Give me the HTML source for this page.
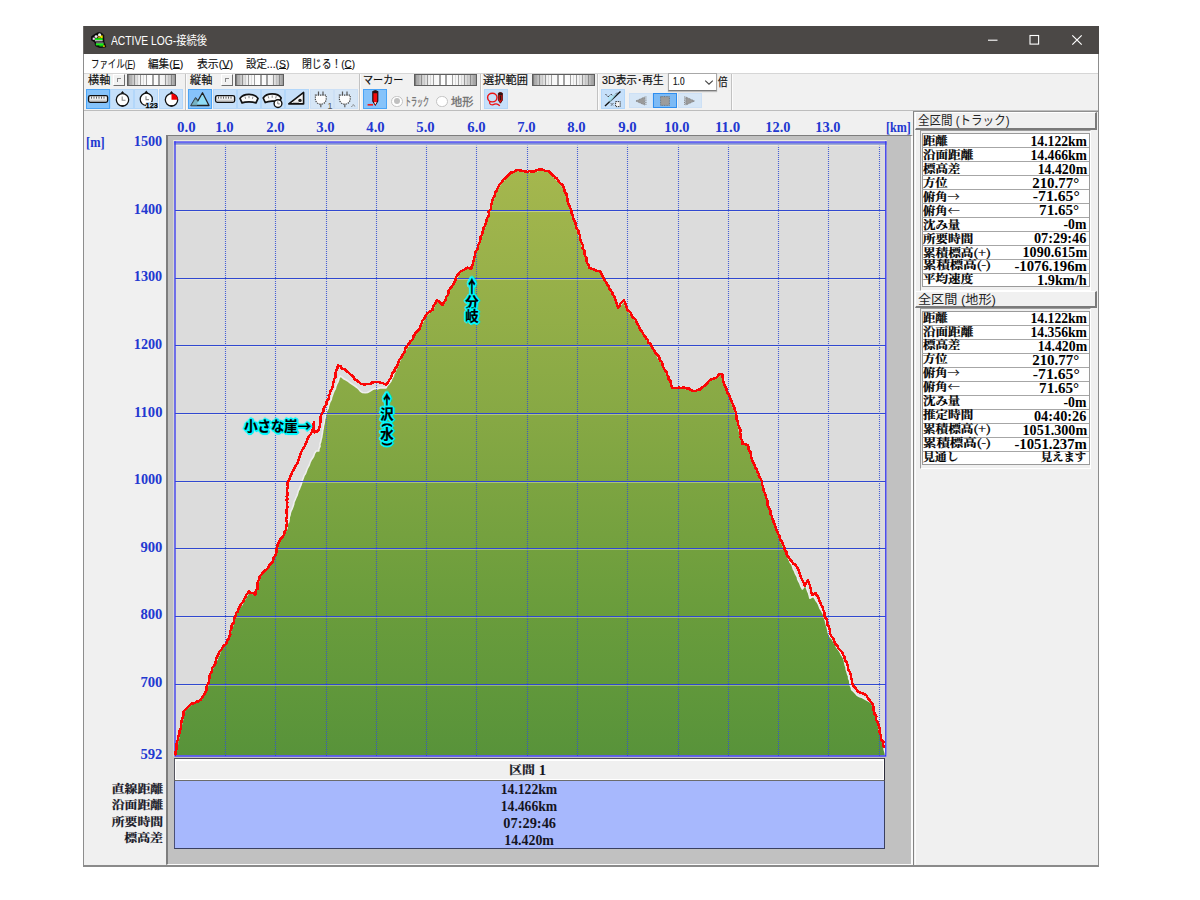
<!DOCTYPE html>
<html lang="ja"><head><meta charset="utf-8"><title>ACTIVE LOG-接続後</title>
<style>
html,body{margin:0;padding:0;background:#fff;}
body{width:1200px;height:900px;position:relative;overflow:hidden;font-family:"Liberation Sans","Noto Sans CJK JP",sans-serif;}
div{position:absolute;box-sizing:content-box;}
.abs,.chart{position:absolute;}
.chart{left:0;top:0;}
.fit{display:inline-block;white-space:nowrap;}
.ttl{color:#fff;font:12px/29px "Liberation Sans","Noto Sans CJK JP",sans-serif;white-space:nowrap;}
.menu{font:11.2px/16px "Liberation Sans","Noto Sans CJK JP",sans-serif;color:#111;white-space:nowrap;-webkit-text-stroke:.15px #111;}
.menu u{text-underline-offset:0px;}
.tl{font:11.3px/13px "Liberation Sans","Noto Sans CJK JP",sans-serif;color:#111;white-space:nowrap;-webkit-text-stroke:.2px currentColor;}
.tl.dis{color:#6f6f6f;-webkit-text-stroke:.3px #6f6f6f;}
.radio{width:9.4px;height:9.4px;border:1.3px solid #c3c3c3;border-radius:50%;background:#fff;}
.radio i{position:absolute;left:1.7px;top:1.7px;width:6px;height:6px;border-radius:50%;background:#c0c0c0;}
.ax{font:bold 13.6px/16px "Liberation Serif","Noto Serif CJK SC",serif;color:#2238d0;white-space:nowrap;}
.ar{font-family:"Noto Sans CJK JP",sans-serif;}
.ar2{font-family:"Noto Serif CJK SC",serif;}
.mk{font:bold 13.4px/16px "Liberation Sans","Noto Sans CJK JP",sans-serif;color:#000;white-space:nowrap;-webkit-text-stroke:.2px #000;
 text-shadow:1.5px 0 0 #00f8ff,-1.5px 0 0 #00f8ff,0 1.5px 0 #00f8ff,0 -1.5px 0 #00f8ff,1.2px 1.2px 0 #00f8ff,-1.2px -1.2px 0 #00f8ff,1.2px -1.2px 0 #00f8ff,-1.2px 1.2px 0 #00f8ff,2px 0 1px #00f8ff,-2px 0 1px #00f8ff,0 2px 1px #00f8ff,0 -2px 1px #00f8ff,0 0 2px #00f8ff;}
.mk.v{width:16px;height:0;}
.mk.v b{display:block;position:absolute;left:0;width:16px;height:16px;text-align:center;font-weight:bold;overflow:visible;line-height:16px;}
.mk.v b.va span{display:inline-block;transform:scaleY(1.55);transform-origin:50% 50%;}
.mk.v b.vp i{display:inline-block;font-style:normal;transform:rotate(90deg) scale(1.0,.82);line-height:16px;}
.bt{font:bold 14px/16px "Liberation Serif","Noto Serif CJK SC",serif;color:#15151f;white-space:nowrap;}
.ph{font:12.5px/16px "Liberation Sans","Noto Sans CJK JP",sans-serif;color:#262626;white-space:nowrap;font-weight:400;}
.pr{font:bold 14px/16px "Liberation Serif","Noto Serif CJK SC",serif;color:#000;white-space:nowrap;}
.cj{font-family:"Noto Serif CJK SC",serif;font-size:12.3px;line-height:16px;position:relative;top:0px;display:inline-block;transform:scaleY(.9);-webkit-text-stroke:.25px currentColor;}
</style></head>
<body>
<div style="left:83px;top:26px;width:1016px;height:840px;background:#f0f0f0;"></div>
<div style="left:83px;top:26px;width:1016px;height:27.9px;background:#4b4846;"></div>
<div class="ttl" style="left:111px;top:27px;"><span class="fit" style="transform:scaleX(0.8570);transform-origin:left 50%">ACTIVE LOG-接続後</span></div>
<svg class="abs" style="left:980px;top:26px" width="119" height="28" viewBox="0 0 119 28"><path d="M8,14.2 h9.5" stroke="#fff" stroke-width="1.1" fill="none"/><rect x="50" y="9.5" width="8.6" height="8.6" stroke="#fff" stroke-width="1.1" fill="none"/><path d="M92.3,9.3 l9.4,9.4 M101.7,9.3 l-9.4,9.4" stroke="#fff" stroke-width="1.2" fill="none"/></svg>
<svg class="abs" style="left:91.2px;top:31.7px" width="16" height="16" viewBox="0 0 16 16"><path d="M7.3,.4 L10.5,.9 L12.8,3.3 L13.1,10 L14,12 L15,14.9 L9,15.7 L4.6,14 L3.7,10.2 L.2,7.9 L.2,4.8 L3.7,2.3 Z" fill="#0a0a0a" stroke="#0a0a0a" stroke-width=".6" stroke-linejoin="round"/><rect x="6.8" y="3.4" width="4.9" height="2.9" fill="#f0e000"/><rect x="3.9" y="6.3" width="7.8" height="2.1" fill="#16f016"/><rect x="3.9" y="8.3" width="7.8" height="1" fill="#f2d4f2"/><rect x="5.1" y="10.6" width="7.4" height=".9" fill="#eec8ee"/><rect x="4.9" y="11.4" width="7.8" height="2" fill="#16f016"/><rect x="8.4" y="13.3" width="4.1" height="1.1" fill="#16f016"/><rect x="12" y="13.4" width="1.9" height="1.4" fill="#e8d000"/><rect x="1.7" y="5.6" width="2.1" height="2.2" fill="#f0dcf0"/><circle cx="5.1" cy="4.6" r="1.45" fill="#f4e8f4"/><circle cx="8.6" cy="2.7" r="1.55" fill="#f0f0f0"/><path d="M6.6,5.6 l1.6,-1.2 l1.2,1.4" fill="none" stroke="#0a0a0a" stroke-width=".8"/></svg>
<div style="left:84px;top:53.9px;width:1014px;height:19.2px;background:#ffffff;"></div>
<div class="menu" style="left:91.2px;top:56px;"><span class="fit" style="transform:scaleX(0.7517);transform-origin:left 50%">ファイル(<u>F</u>)</span></div>
<div class="menu" style="left:148.3px;top:56px;"><span class="fit" style="transform:scaleX(0.9487);transform-origin:left 50%">編集(<u>E</u>)</span></div>
<div class="menu" style="left:196.6px;top:56px;"><span class="fit" style="transform:scaleX(0.9675);transform-origin:left 50%">表示(<u>V</u>)</span></div>
<div class="menu" style="left:245.6px;top:56px;"><span class="fit" style="transform:scaleX(0.9327);transform-origin:left 50%">設定...(<u>S</u>)</span></div>
<div class="menu" style="left:301.9px;top:56px;"><span class="fit" style="transform:scaleX(0.8788);transform-origin:left 50%">閉じる！(<u>C</u>)</span></div>
<div style="left:84px;top:73px;width:1014px;height:37.6px;background:#f1f1f1;border-top:1px solid #d6d6d6;border-bottom:1px solid #bdbdbd;box-sizing:border-box;"></div>
<div class="tl" style="left:88px;top:74.1px;"><span class="fit" style="transform:scaleX(0.9863);transform-origin:left 50%">横軸</span></div>
<div style="left:112.8px;top:74.2px;width:12px;height:12px;background:#f2f2f2;border:1px solid #fff;border-right:1.5px solid #6e6e6e;border-bottom:1.5px solid #6e6e6e;box-sizing:border-box;"><div style="left:3.2px;top:3px;width:3px;height:3px;border-left:1px solid #888;border-top:1px solid #888;"></div></div>
<div style="left:126.9px;top:73.7px;width:48.8px;height:12.1px;background:repeating-linear-gradient(90deg,rgba(105,105,105,.62) 0 1.2px,rgba(255,255,255,0) 1.2px 3.2px,rgba(150,150,150,.28) 3.2px 4px,rgba(255,255,255,0) 4px 6.1px),linear-gradient(90deg,#9a9a9a 0,#c4c4c4 9%,#f2f2f2 24%,#ffffff 50%,#f2f2f2 76%,#c4c4c4 91%,#9a9a9a 100%);border:1.3px solid #5e5e5e;box-sizing:border-box;"></div>
<div style="left:86px;top:89px;width:24px;height:20px;background:#86c3fa;border:1px solid #4aa4f6;box-sizing:border-box;"><svg class="abs" style="left:-1px;top:-1px" width="24" height="20" viewBox="0 0 24 20"><rect x="2.6" y="6.6" width="19" height="6.6" rx="1.6" fill="#f4f4f4" stroke="#111" stroke-width="1.4"/><path d="M5.5,7.5v2.2M8,7.5v2.2M10.5,7.5v2.2M13,7.5v2.2M15.5,7.5v2.2M18,7.5v2.2" stroke="#555" stroke-width="0.9"/><rect x="3.6" y="10.6" width="17" height="1.8" fill="#cfcfcf"/></svg></div>
<div style="left:110.2px;top:89px;width:24px;height:20px;background:#c6e0fa;border:1px solid #b3d7fa;box-sizing:border-box;"><svg class="abs" style="left:-1px;top:-1px" width="24" height="20" viewBox="0 0 24 20"><circle cx="12.5" cy="10.8" r="6.2" fill="#fff" stroke="#111" stroke-width="1.3"/><path d="M10.4,4.6 L12.5,1.9 L14.6,4.6 Z" fill="#111"/><path d="M11.4,17 h2.2" stroke="#111" stroke-width="1.4"/><path d="M12.2,7.6 v3.6 h3.3" stroke="#8a8a8a" stroke-width="1.1" fill="none"/></svg></div>
<div style="left:134.4px;top:89px;width:24px;height:20px;background:#c6e0fa;border:1px solid #b3d7fa;box-sizing:border-box;"><svg class="abs" style="left:-1px;top:-1px" width="24" height="20" viewBox="0 0 24 20"><circle cx="12.3" cy="10.3" r="6.1" fill="#fff" stroke="#111" stroke-width="1.3"/><path d="M10.2,4.2 L12.3,1.5 L14.4,4.2 Z" fill="#111"/><path d="M12,7.2 v3.4 h3" stroke="#8a8a8a" stroke-width="1.1" fill="none"/><rect x="12" y="13" width="12" height="7" fill="#c6e0fa"/><text x="11.6" y="19" font-family="Liberation Sans,sans-serif" font-weight="bold" font-size="7.4" fill="#000" stroke="#000" stroke-width=".25">123</text></svg></div>
<div style="left:158.6px;top:89px;width:24px;height:20px;background:#c6e0fa;border:1px solid #b3d7fa;box-sizing:border-box;"><svg class="abs" style="left:-1px;top:-1px" width="24" height="20" viewBox="0 0 24 20"><circle cx="12.5" cy="10.8" r="6.2" fill="#fff" stroke="#111" stroke-width="1.3"/><path d="M12.5,10.8 V4.6 A6.2,6.2 0 0 1 18.7,10.8 Z" fill="#f00000"/><path d="M10.4,4.6 L12.5,1.9 L14.6,4.6 Z" fill="#111"/><path d="M11.4,17 h2.2" stroke="#111" stroke-width="1.4"/></svg></div>
<div style="left:185px;top:74px;width:1px;height:36px;background:#c2c2c2;"></div><div style="left:186px;top:74px;width:1px;height:36px;background:#fbfbfb;"></div>
<div class="tl" style="left:189.75px;top:74.1px;"><span class="fit" style="transform:scaleX(0.9885);transform-origin:left 50%">縦軸</span></div>
<div style="left:220.6px;top:74.2px;width:12px;height:12px;background:#f2f2f2;border:1px solid #fff;border-right:1.5px solid #6e6e6e;border-bottom:1.5px solid #6e6e6e;box-sizing:border-box;"><div style="left:3.2px;top:3px;width:3px;height:3px;border-left:1px solid #888;border-top:1px solid #888;"></div></div>
<div style="left:234.8px;top:73.7px;width:49px;height:12.1px;background:repeating-linear-gradient(90deg,rgba(105,105,105,.62) 0 1.2px,rgba(255,255,255,0) 1.2px 3.2px,rgba(150,150,150,.28) 3.2px 4px,rgba(255,255,255,0) 4px 6.1px),linear-gradient(90deg,#9a9a9a 0,#c4c4c4 9%,#f2f2f2 24%,#ffffff 50%,#f2f2f2 76%,#c4c4c4 91%,#9a9a9a 100%);border:1.3px solid #5e5e5e;box-sizing:border-box;"></div>
<div style="left:188.3px;top:89px;width:24px;height:20px;background:#86c3fa;border:1px solid #4aa4f6;box-sizing:border-box;"><svg class="abs" style="left:-1px;top:-1px" width="24" height="20" viewBox="0 0 24 20"><path d="M3,16.5 L7.5,9 L9.8,12 L14.5,3.8 L21,16.5 Z" fill="#8fdcf5" stroke="#222" stroke-width="1.3" stroke-linejoin="round"/><path d="M3,16.5 L7.5,9 L9.8,12 L9,16.5 Z" fill="#6fa9b8" opacity=".8"/></svg></div>
<div style="left:212.55px;top:89px;width:24px;height:20px;background:#c6e0fa;border:1px solid #b3d7fa;box-sizing:border-box;"><svg class="abs" style="left:-1px;top:-1px" width="24" height="20" viewBox="0 0 24 20"><rect x="2.6" y="6.6" width="19" height="6.6" rx="1.6" fill="#f4f4f4" stroke="#111" stroke-width="1.4"/><path d="M5.5,7.5v2.2M8,7.5v2.2M10.5,7.5v2.2M13,7.5v2.2M15.5,7.5v2.2M18,7.5v2.2" stroke="#555" stroke-width="0.9"/><rect x="3.6" y="10.6" width="17" height="1.8" fill="#cfcfcf"/></svg></div>
<div style="left:236.8px;top:89px;width:24px;height:20px;background:#c6e0fa;border:1px solid #b3d7fa;box-sizing:border-box;"><svg class="abs" style="left:-1px;top:-1px" width="24" height="20" viewBox="0 0 24 20"><path d="M3,9.4 C6.5,4 17.5,4 21,9.4 L19,13.9 C15.5,12.5 8.5,12.5 5,13.9 Z" fill="#fbfbfb" stroke="#111" stroke-width="1.7" stroke-linejoin="round"/><path d="M8,7.6l.6,2.2M12,6.8v2.4M16,7.6l-.6,2.2" stroke="#888" stroke-width="1"/></svg></div>
<div style="left:261.05px;top:89px;width:24px;height:20px;background:#c6e0fa;border:1px solid #b3d7fa;box-sizing:border-box;"><svg class="abs" style="left:-1px;top:-1px" width="24" height="20" viewBox="0 0 24 20"><path d="M2.2,9 C5.7,3.6 16.7,3.6 20.2,9 L18.6,12.6 C14.7,11.6 7.7,12 4.2,13.5 Z" fill="#fbfbfb" stroke="#111" stroke-width="1.7" stroke-linejoin="round"/><path d="M7.2,7.2l.6,2.2M11.2,6.4v2.4M15.2,7.2l-.6,2.2" stroke="#888" stroke-width="1"/><circle cx="17" cy="14.6" r="3.9" fill="#fff" stroke="#111" stroke-width="1.4"/><path d="M16.8,12.4v2.5h2" stroke="#777" stroke-width="1" fill="none"/></svg></div>
<div style="left:285.3px;top:89px;width:24px;height:20px;background:#c6e0fa;border:1px solid #b3d7fa;box-sizing:border-box;"><svg class="abs" style="left:-1px;top:-1px" width="24" height="20" viewBox="0 0 24 20"><path d="M3.8,14.9 L18.6,3.4 L18.6,14.9 Z" fill="#f4f4f4" stroke="#111" stroke-width="1.6" stroke-linejoin="round"/><circle cx="15" cy="11.4" r="1.7" fill="#222"/><path d="M8,13.4h6" stroke="#aaa" stroke-width=".8"/></svg></div>
<div style="left:309.55px;top:89px;width:24px;height:20px;background:#d6e6f6;border:1px solid #cde0f5;box-sizing:border-box;"><svg class="abs" style="left:-1px;top:-1px" width="24" height="20" viewBox="0 0 24 20"><path d="M8.5,2.4v3.6M13,2.4v3.6" stroke="#555" stroke-width="1.2"/><path d="M5.4,6.2h10.8v3.6c0,3.4-2.6,5.4-5.4,5.4s-5.4,-2-5.4,-5.4z" fill="#fdfdfd" stroke="#4a4a4a" stroke-width="1.2" stroke-dasharray="1.4,.9"/><path d="M10.8,15.2v3" stroke="#666" stroke-width="1.3"/><text x="17.6" y="19.6" font-family="Liberation Sans,sans-serif" font-size="9" fill="#555">1</text></svg></div>
<div style="left:333.8px;top:89px;width:24px;height:20px;background:#d6e6f6;border:1px solid #cde0f5;box-sizing:border-box;"><svg class="abs" style="left:-1px;top:-1px" width="24" height="20" viewBox="0 0 24 20"><path d="M8.5,2.4v3.6M13,2.4v3.6" stroke="#555" stroke-width="1.2"/><path d="M5.4,6.2h10.8v3.6c0,3.4-2.6,5.4-5.4,5.4s-5.4,-2-5.4,-5.4z" fill="#fdfdfd" stroke="#4a4a4a" stroke-width="1.2" stroke-dasharray="1.4,.9"/><path d="M10.8,15.2v3" stroke="#666" stroke-width="1.3"/><path d="M17.6,17.8l1.7,-2.4 1.7,2.4" stroke="#666" stroke-width="1" fill="none" stroke-dasharray="1.1,.7"/></svg></div>
<div style="left:359px;top:74px;width:1px;height:36px;background:#c2c2c2;"></div><div style="left:360px;top:74px;width:1px;height:36px;background:#fbfbfb;"></div>
<div class="tl" style="left:363.25px;top:74.1px;"><span class="fit" style="transform:scaleX(0.8926);transform-origin:left 50%">マーカー</span></div>
<div style="left:413.5px;top:73.7px;width:63.2px;height:12.1px;background:repeating-linear-gradient(90deg,rgba(105,105,105,.62) 0 1.2px,rgba(255,255,255,0) 1.2px 3.2px,rgba(150,150,150,.28) 3.2px 4px,rgba(255,255,255,0) 4px 6.1px),linear-gradient(90deg,#9a9a9a 0,#c4c4c4 9%,#f2f2f2 24%,#ffffff 50%,#f2f2f2 76%,#c4c4c4 91%,#9a9a9a 100%);border:1.3px solid #5e5e5e;box-sizing:border-box;"></div>
<div style="left:363.3px;top:89px;width:23.7px;height:20px;background:#86c3fa;border:1px solid #4aa4f6;box-sizing:border-box;"><svg class="abs" style="left:-1px;top:-1px" width="24" height="20" viewBox="0 0 24 20"><path d="M9.8,2.6 q2.5,-1.7 5,0 v9.6 l-2.5,3.9 l-2.5,-3.9 z" fill="#f40a0a" stroke="#1a0808" stroke-width="1.1"/><path d="M10.1,2.5 q2.2,-1.5 4.4,0 v1.7 h-4.4 z" fill="#2a1010"/><path d="M11,13.3 l1.3,2.1 l1.3,-2.1 z" fill="#fff"/><path d="M11.7,15 l.6,1.9 l.6,-1.9 z" fill="#f40a0a"/><path d="M4.6,15.8 h5.4" stroke="#f02020" stroke-width="1.7"/></svg></div>
<div class="radio" style="left:391.2px;top:95.7px;"><i></i></div>
<div class="tl dis" style="left:405.25px;top:95.6px;"><span class="fit" style="transform:scaleX(0.5276);transform-origin:left 50%">トラック</span></div>
<div class="radio" style="left:436.2px;top:95.7px;"></div>
<div class="tl dis" style="left:451px;top:95.6px;"><span class="fit" style="transform:scaleX(0.9885);transform-origin:left 50%">地形</span></div>
<div style="left:479.5px;top:74px;width:1px;height:36px;background:#c2c2c2;"></div><div style="left:480.5px;top:74px;width:1px;height:36px;background:#fbfbfb;"></div>
<div class="tl" style="left:483.25px;top:74.1px;"><span class="fit" style="transform:scaleX(0.9922);transform-origin:left 50%">選択範囲</span></div>
<div style="left:532.2px;top:73.7px;width:63px;height:12.1px;background:repeating-linear-gradient(90deg,rgba(105,105,105,.62) 0 1.2px,rgba(255,255,255,0) 1.2px 3.2px,rgba(150,150,150,.28) 3.2px 4px,rgba(255,255,255,0) 4px 6.1px),linear-gradient(90deg,#9a9a9a 0,#c4c4c4 9%,#f2f2f2 24%,#ffffff 50%,#f2f2f2 76%,#c4c4c4 91%,#9a9a9a 100%);border:1.3px solid #5e5e5e;box-sizing:border-box;"></div>
<div style="left:484.3px;top:89px;width:23.7px;height:20px;background:#c6e0fa;border:1px solid #b3d7fa;box-sizing:border-box;"><svg class="abs" style="left:-1px;top:-1px" width="24" height="20" viewBox="0 0 24 20"><ellipse cx="8.3" cy="8.6" rx="4.7" ry="4.3" fill="none" stroke="#ee1111" stroke-width="1.4"/><path d="M6,12.6 C4.5,15.5 8,16.5 10.5,15.2 C12.5,14.3 14.5,15.5 15.8,16.8" fill="none" stroke="#ee1111" stroke-width="1.3"/><path d="M14.4,4.2 q2,-1.4 4,0 v7 l-2,3 l-2,-3 z" fill="#ee1111" stroke="#5a0d0d" stroke-width=".9"/><path d="M14.5,4.1 q1.9,-1.3 3.8,0 v2.2 h-3.8 z" fill="#2a1515"/><rect x="15.7" y="6.5" width="1.6" height="4.8" fill="#2a1515"/></svg></div>
<div style="left:597px;top:74px;width:1px;height:36px;background:#c2c2c2;"></div><div style="left:598px;top:74px;width:1px;height:36px;background:#fbfbfb;"></div>
<div class="tl" style="left:601.7px;top:74.1px;"><span class="fit" style="transform:scaleX(0.9444);transform-origin:left 50%">3D表示･再生</span></div>
<div style="left:667.5px;top:73.2px;width:49px;height:18.3px;background:#fff;border:1px solid #a8a8a8;border-bottom-color:#7c7c7c;box-sizing:border-box;box-shadow:0 1px 1px rgba(0,0,0,.22);"><div class="tl" style="left:4px;top:1.2px;font-size:11px;"><span class="fit" style="transform:scaleX(0.7518);transform-origin:left 50%">1.0</span></div><svg class="abs" style="left:34px;top:4px" width="12" height="9" viewBox="0 0 12 9"><path d="M2.2,2.6 L6,6.2 L9.8,2.6" fill="none" stroke="#444" stroke-width="1.1"/></svg></div>
<div class="tl" style="left:718.25px;top:75.6px;"><span class="fit" style="transform:scaleX(0.8486);transform-origin:left 50%">倍</span></div>
<div style="left:601.3px;top:89px;width:23.7px;height:20px;background:#c6e0fa;border:1px solid #b3d7fa;box-sizing:border-box;"><svg class="abs" style="left:-1px;top:-1px" width="24" height="20" viewBox="0 0 24 20"><path d="M4,17 L19.5,2.6" stroke="#111" stroke-width="1.4"/><path d="M4.5,5 L7,8 L10,5.2 L12.5,7.2 L16.2,3.4" stroke="#333" stroke-width="1" fill="none" stroke-dasharray="1.2,.8"/><path d="M6.5,8.5 L16,4.5 L9,13.5 z" fill="#a9e5f3" opacity=".75"/><path d="M9.8,14.2 l2.6,2.6 M12.4,14.2 l-2.6,2.6" stroke="#333" stroke-width=".9" stroke-dasharray="1,.6"/><rect x="14.6" y="12.6" width="4.6" height="5" fill="#f6f6f6" stroke="#333" stroke-width="1" stroke-dasharray="1.3,.8"/></svg></div>
<div style="left:629px;top:92.7px;width:23.7px;height:15.3px;background:#d6e6f6;border:1px solid #cde0f5;box-sizing:border-box;"><svg class="abs" style="left:-1px;top:-1px" width="24" height="16" viewBox="0 0 24 16"><path d="M15.6,4 L6.8,8 L15.6,12 Z" fill="#9a9a9a" stroke="#777" stroke-width=".8" stroke-dasharray="1,.7"/><path d="M16.9,3.6v8.8" stroke="#8a8a8a" stroke-width="1.2" stroke-dasharray="1,.8"/></svg></div>
<div style="left:652.7px;top:92.7px;width:24.3px;height:15.3px;background:#7cbaf5;border:1px solid #2e8ef0;box-sizing:border-box;"><svg class="abs" style="left:-1px;top:-1px" width="24" height="16" viewBox="0 0 24 16"><rect x="7.6" y="3.6" width="8.8" height="8.8" fill="#9c9c9c" stroke="#6f6f6f" stroke-width=".9" stroke-dasharray="1,.7"/></svg></div>
<div style="left:678.3px;top:92.7px;width:23.7px;height:15.3px;background:#d6e6f6;border:1px solid #cde0f5;box-sizing:border-box;"><svg class="abs" style="left:-1px;top:-1px" width="24" height="16" viewBox="0 0 24 16"><path d="M7.8,4 L16.6,8 L7.8,12 Z" fill="#9a9a9a" stroke="#777" stroke-width=".8" stroke-dasharray="1,.7"/><path d="M6.6,3.6v8.8" stroke="#8a8a8a" stroke-width="1.2" stroke-dasharray="1,.8"/></svg></div>
<div style="left:730.5px;top:74px;width:1px;height:36px;background:#c2c2c2;"></div><div style="left:731.5px;top:74px;width:1px;height:36px;background:#fbfbfb;"></div>
<div style="left:166px;top:135.4px;width:747px;height:729.6px;background:#c1c1c1;border-left:2px solid #7d7d7d;border-top:1.8px solid #7d7d7d;border-right:2px solid #fbfbfb;border-bottom:1.3px solid #fbfbfb;box-sizing:border-box;"></div>
<svg class="chart" width="1200" height="900" viewBox="0 0 1200 900">
<defs><linearGradient id="tg" gradientUnits="userSpaceOnUse" x1="0" y1="168" x2="0" y2="756"><stop offset="0" stop-color="#a5b74e"/><stop offset="0.43" stop-color="#86a844"/><stop offset="0.735" stop-color="#6b9d3c"/><stop offset="1" stop-color="#58933a"/></linearGradient></defs>
<rect x="173.3" y="140.2" width="713.3" height="616.5" fill="#dcdcdc"/>
<path d="M175.3,754.5 L175.7,752.4 L176.4,749.9 L176.3,747.8 L176.5,746.2 L177.5,743.9 L177.3,741.8 L178.3,739.3 L178.7,737.2 L178.7,734.7 L179.1,732.5 L179.7,730.7 L180.1,728.7 L180.9,726.5 L181.5,723.8 L181.9,721.7 L182.6,719.5 L182.7,717.3 L183.8,714.8 L184.3,712.4 L184.5,710.5 L186.1,708.5 L188.4,707.2 L190.0,705.0 L192.4,703.8 L194.7,702.7 L196.4,702.0 L198.9,700.8 L201.0,699.5 L202.5,697.6 L203.7,695.2 L205.3,692.9 L206.5,690.3 L206.9,688.1 L207.6,685.4 L207.8,683.3 L208.2,681.2 L208.7,678.1 L209.2,676.5 L210.0,673.8 L210.9,671.3 L211.6,669.1 L213.2,667.4 L214.2,665.3 L214.7,663.1 L215.9,661.1 L217.3,659.0 L217.7,656.8 L219.3,654.7 L219.7,651.9 L221.0,650.0 L221.9,647.8 L223.8,646.6 L224.9,644.8 L226.1,642.5 L226.9,640.5 L228.5,639.0 L229.3,636.6 L229.6,634.7 L229.9,632.4 L230.8,630.6 L231.4,628.1 L232.5,626.2 L233.0,624.1 L233.0,621.8 L233.9,619.9 L234.5,617.7 L235.2,615.2 L235.8,613.3 L237.5,610.8 L238.9,608.6 L239.7,606.5 L241.8,604.9 L243.0,602.3 L243.9,600.1 L245.6,598.1 L246.6,595.7 L248.0,593.8 L249.4,591.3 L251.2,592.9 L253.2,593.5 L255.3,595.0 L256.0,592.7 L256.1,590.5 L256.6,588.4 L257.7,586.1 L258.2,583.4 L258.5,581.2 L259.5,578.7 L259.7,576.7 L261.6,574.5 L262.7,572.8 L264.8,571.2 L266.0,569.7 L267.5,567.5 L269.3,565.9 L271.1,564.0 L272.5,562.0 L273.1,559.7 L273.7,557.9 L274.8,555.6 L275.2,553.2 L276.4,551.1 L276.6,548.8 L277.9,546.4 L278.1,544.2 L279.2,542.5 L279.8,540.0 L280.8,537.7 L282.2,535.9 L283.7,533.7 L284.8,531.8 L286.2,530.0 L287.2,528.0 L287.0,526.1 L287.5,523.5 L288.8,521.7 L289.1,519.2 L289.2,517.3 L290.0,515.0 L290.4,512.6 L291.3,510.3 L292.1,508.8 L293.0,506.4 L293.7,504.3 L294.0,502.2 L295.0,500.0 L295.8,498.0 L297.0,495.5 L297.6,493.5 L298.3,490.9 L299.3,489.2 L300.2,486.8 L301.1,484.6 L301.8,482.2 L302.5,480.0 L303.3,477.9 L304.1,475.6 L305.5,473.6 L306.4,471.1 L307.1,469.0 L308.2,466.8 L309.2,465.0 L310.0,462.5 L311.0,460.3 L312.7,457.8 L313.7,456.0 L314.6,453.3 L316.2,451.0 L318.8,451.0 L318.9,448.9 L320.0,446.4 L319.8,444.1 L320.7,441.9 L321.1,439.5 L321.8,437.1 L322.0,435.2 L322.5,432.5 L322.7,430.4 L323.2,428.3 L323.4,426.2 L324.1,423.3 L324.4,421.3 L324.6,419.1 L325.4,417.1 L325.7,414.5 L326.2,412.5 L326.8,410.5 L328.2,408.1 L328.4,406.2 L329.3,403.5 L329.9,401.8 L331.2,399.5 L331.7,397.2 L332.5,395.0 L333.1,393.3 L334.0,390.9 L335.3,388.9 L335.8,386.4 L336.7,384.1 L337.8,382.2 L338.6,380.0 L339.1,377.9 L340.0,376.0 L342.0,377.1 L343.8,378.8 L346.2,380.0 L348.3,381.3 L350.5,383.0 L352.8,384.6 L355.0,386.0 L357.0,387.5 L359.1,389.5 L360.3,391.1 L362.5,392.5 L365.3,392.7 L367.5,392.5 L369.7,391.3 L372.5,389.5 L375.1,388.6 L377.1,388.9 L380.0,388.0 L383.1,387.8 L386.0,388.0 L387.3,385.4 L389.1,383.6 L391.0,381.0 L391.9,378.3 L393.3,376.4 L393.7,374.1 L395.1,371.6 L396.0,369.0 L397.1,367.1 L398.2,364.8 L398.8,362.4 L400.0,360.0 L401.1,358.2 L402.2,356.4 L403.4,354.0 L404.2,351.9 L405.6,349.9 L406.6,348.0 L407.8,346.4 L408.9,344.7 L410.0,342.5 L410.9,340.8 L412.5,338.7 L413.9,337.0 L414.9,334.7 L416.6,332.5 L417.6,331.0 L418.4,329.0 L420.0,327.0 L421.2,325.3 L421.9,323.4 L423.1,321.0 L424.5,318.6 L425.4,317.1 L426.2,315.0 L428.2,313.6 L430.3,311.6 L432.5,310.0 L433.6,307.7 L434.5,304.9 L435.8,302.5 L437.0,300.0 L439.3,301.5 L441.3,303.3 L443.0,305.0 L443.9,302.8 L444.8,301.3 L445.7,299.1 L446.4,296.7 L447.2,294.9 L448.4,293.0 L448.8,291.0 L450.0,288.8 L451.6,286.7 L452.1,284.3 L453.4,282.1 L455.3,280.3 L456.4,278.4 L457.8,276.1 L458.8,274.0 L460.0,271.8 L462.7,270.4 L465.1,268.7 L467.5,267.5 L471.2,268.8 L472.0,266.4 L472.7,263.8 L472.9,261.5 L474.0,259.9 L474.5,257.2 L475.0,255.0 L476.0,253.0 L476.5,250.3 L477.1,248.2 L477.9,245.9 L478.9,244.1 L479.1,241.6 L479.9,238.9 L481.2,237.1 L482.1,234.7 L482.5,232.5 L482.9,230.2 L484.1,228.4 L485.1,225.7 L485.4,223.2 L486.4,221.0 L486.7,218.6 L487.4,216.9 L488.2,214.9 L488.9,212.5 L490.0,210.0 L490.3,207.4 L491.4,205.4 L492.1,203.2 L492.1,201.5 L493.3,199.3 L493.9,196.5 L494.5,194.9 L495.0,192.5 L496.2,191.0 L497.3,189.1 L498.9,186.5 L499.6,185.1 L501.5,182.8 L502.5,181.2 L504.1,179.7 L505.7,178.0 L507.7,175.6 L509.4,174.3 L511.2,172.5 L513.3,171.8 L515.1,171.1 L517.5,170.0 L519.9,170.6 L522.6,170.9 L524.9,171.7 L527.5,172.0 L530.4,171.8 L532.6,171.0 L534.6,171.1 L537.7,170.6 L539.9,170.0 L542.5,169.5 L546.0,170.6 L548.8,171.2 L550.4,172.7 L551.8,174.7 L553.3,176.1 L555.0,177.5 L556.5,179.5 L558.2,180.7 L559.0,182.3 L560.8,184.2 L562.5,186.1 L563.8,187.5 L564.1,190.0 L565.4,192.2 L565.9,194.0 L566.8,196.6 L567.4,198.9 L567.8,200.5 L568.7,203.3 L569.1,205.5 L570.0,207.5 L571.1,209.4 L571.5,211.9 L572.1,213.7 L572.7,216.3 L573.8,218.2 L574.0,220.6 L575.2,222.3 L575.8,225.0 L576.7,226.8 L577.1,229.0 L577.6,230.8 L578.3,233.4 L579.2,235.4 L580.0,237.5 L580.5,239.7 L581.0,241.4 L582.3,243.8 L582.2,246.2 L583.4,247.9 L583.8,250.2 L584.4,252.1 L584.6,255.0 L585.9,256.8 L586.3,258.7 L587.1,261.0 L587.9,263.4 L588.4,265.7 L588.8,267.5 L590.8,267.9 L593.0,268.7 L595.2,269.4 L597.8,270.8 L600.0,271.2 L601.0,273.6 L602.5,274.8 L603.3,277.1 L604.0,279.5 L605.2,281.1 L606.5,283.4 L607.5,285.0 L608.7,286.9 L609.6,288.7 L611.1,291.3 L611.6,292.5 L612.7,294.7 L614.3,297.1 L615.0,298.8 L616.0,300.6 L616.7,303.3 L617.4,305.7 L618.0,307.5 L619.1,305.5 L621.1,304.4 L622.5,302.1 L623.8,300.5 L624.8,303.1 L625.3,305.1 L626.4,307.3 L627.5,310.0 L629.0,311.5 L630.3,313.2 L632.1,314.9 L633.7,316.8 L635.0,318.8 L635.7,321.1 L636.9,323.0 L638.5,325.0 L639.0,326.6 L640.0,328.9 L641.7,330.6 L642.5,332.5 L643.7,334.3 L645.3,336.4 L646.4,338.0 L647.3,339.9 L648.9,342.3 L649.7,344.5 L651.1,346.0 L652.2,347.9 L653.8,350.0 L655.3,351.8 L656.0,353.9 L657.4,356.2 L658.4,358.2 L659.6,360.1 L661.4,361.6 L662.5,363.8 L663.4,365.8 L664.1,367.9 L665.1,370.8 L666.5,372.9 L666.7,374.6 L668.3,376.6 L669.0,379.0 L670.2,381.0 L670.9,383.5 L671.3,385.4 L672.5,388.0 L675.0,387.9 L676.7,387.7 L679.6,387.5 L681.6,387.3 L683.8,387.5 L685.7,388.5 L688.4,388.8 L690.2,389.4 L692.8,390.5 L695.0,391.2 L697.3,390.1 L700.0,389.5 L701.8,388.1 L703.6,386.4 L704.8,384.4 L706.9,383.1 L708.5,381.2 L710.0,380.0 L713.4,378.9 L716.2,378.0 L718.4,376.2 L720.0,373.8 L722.5,374.5 L723.0,376.5 L723.8,379.2 L724.3,381.4 L724.2,384.2 L725.0,386.2 L725.9,388.3 L727.0,390.9 L727.7,393.1 L729.1,395.4 L729.9,397.9 L731.2,400.0 L732.2,402.4 L732.5,404.5 L733.3,406.6 L733.8,408.9 L735.2,410.7 L735.5,412.9 L736.2,415.0 L736.8,416.8 L737.6,419.2 L737.4,421.3 L738.0,424.1 L738.3,425.7 L739.3,428.0 L739.2,430.6 L740.2,432.7 L740.7,434.6 L741.4,437.3 L741.2,439.0 L742.0,441.5 L742.5,443.8 L744.8,444.1 L747.5,445.0 L748.2,447.1 L749.1,450.0 L749.6,452.1 L750.8,454.1 L751.7,457.1 L752.1,459.0 L753.2,461.4 L753.8,463.8 L754.6,466.1 L755.8,467.7 L756.4,469.7 L757.4,472.3 L758.7,474.2 L759.6,476.2 L760.0,478.0 L761.2,480.0 L762.2,482.6 L762.3,484.4 L763.2,486.6 L763.8,488.7 L764.3,491.3 L764.6,493.2 L766.0,496.0 L766.6,498.1 L767.1,500.6 L767.5,502.5 L768.6,504.4 L769.1,506.8 L769.9,509.1 L770.5,511.8 L771.3,513.6 L772.0,515.9 L773.1,518.1 L773.3,520.6 L773.9,522.8 L775.0,525.0 L776.2,527.2 L776.4,529.3 L777.4,531.1 L777.8,533.3 L778.8,535.6 L779.5,537.7 L780.5,540.0 L781.1,542.1 L782.6,544.2 L783.3,546.3 L783.9,548.4 L785.0,550.4 L786.1,552.4 L786.7,554.2 L787.8,556.5 L788.5,558.5 L789.6,560.6 L790.2,562.5 L791.9,564.4 L792.6,566.6 L793.3,569.1 L794.4,570.7 L795.2,573.1 L796.0,574.6 L797.4,577.1 L797.7,579.1 L798.9,581.6 L799.9,583.5 L800.8,586.0 L802.4,589.0 L804.3,586.4 L805.4,583.5 L805.9,585.8 L806.7,588.5 L807.7,591.1 L808.6,593.3 L809.3,595.9 L809.8,598.2 L813.4,596.2 L814.7,598.2 L815.9,600.4 L817.1,601.9 L818.2,603.8 L819.2,606.3 L820.1,608.6 L821.3,610.2 L822.6,612.6 L823.5,614.3 L824.2,616.4 L824.7,618.8 L825.5,620.9 L825.9,623.3 L826.5,625.4 L827.4,628.0 L827.8,630.0 L828.1,632.1 L829.0,634.5 L829.9,636.5 L831.5,638.1 L833.0,640.3 L834.2,642.7 L835.5,644.2 L836.3,646.7 L837.2,648.0 L838.9,650.4 L840.4,652.6 L841.3,654.7 L842.5,656.3 L843.7,658.3 L844.4,660.5 L844.7,662.9 L845.3,665.4 L846.1,667.3 L846.2,669.4 L847.0,671.8 L847.7,674.3 L848.6,676.2 L848.7,678.6 L849.7,680.6 L849.9,683.2 L850.2,685.1 L851.4,687.7 L851.6,689.7 L853.4,691.2 L855.6,693.5 L857.1,695.2 L859.8,696.8 L862.3,697.5 L864.5,698.8 L866.7,700.0 L869.5,701.6 L872.0,703.0 L872.4,704.9 L873.3,707.3 L873.7,709.7 L874.6,711.1 L875.0,713.8 L875.6,715.8 L876.0,717.6 L877.3,720.0 L877.6,722.0 L878.3,724.0 L878.7,726.6 L879.1,728.9 L879.9,731.5 L880.5,733.3 L880.7,735.4 L881.8,737.6 L881.9,739.9 L882.8,742.7 L883.4,745.0 L883.9,747.0 L884.2,749.6 L885.2,753.0 L885.8,756.0 L175.0,756.0 Z" fill="url(#tg)" stroke="#eeeeee" stroke-width="1.6" stroke-linejoin="round"/>
<line x1="225.5" y1="143.0" x2="225.5" y2="756.0" stroke="#3550d6" stroke-width="1.1" stroke-dasharray="1,1" opacity="0.9"/>
<line x1="275.5" y1="143.0" x2="275.5" y2="756.0" stroke="#3550d6" stroke-width="1.1" stroke-dasharray="1,1" opacity="0.9"/>
<line x1="326.5" y1="143.0" x2="326.5" y2="756.0" stroke="#3550d6" stroke-width="1.1" stroke-dasharray="1,1" opacity="0.9"/>
<line x1="376.5" y1="143.0" x2="376.5" y2="756.0" stroke="#3550d6" stroke-width="1.1" stroke-dasharray="1,1" opacity="0.9"/>
<line x1="426.5" y1="143.0" x2="426.5" y2="756.0" stroke="#3550d6" stroke-width="1.1" stroke-dasharray="1,1" opacity="0.9"/>
<line x1="476.5" y1="143.0" x2="476.5" y2="756.0" stroke="#3550d6" stroke-width="1.1" stroke-dasharray="1,1" opacity="0.9"/>
<line x1="527.5" y1="143.0" x2="527.5" y2="756.0" stroke="#3550d6" stroke-width="1.1" stroke-dasharray="1,1" opacity="0.9"/>
<line x1="577.5" y1="143.0" x2="577.5" y2="756.0" stroke="#3550d6" stroke-width="1.1" stroke-dasharray="1,1" opacity="0.9"/>
<line x1="627.5" y1="143.0" x2="627.5" y2="756.0" stroke="#3550d6" stroke-width="1.1" stroke-dasharray="1,1" opacity="0.9"/>
<line x1="678.5" y1="143.0" x2="678.5" y2="756.0" stroke="#3550d6" stroke-width="1.1" stroke-dasharray="1,1" opacity="0.9"/>
<line x1="728.5" y1="143.0" x2="728.5" y2="756.0" stroke="#3550d6" stroke-width="1.1" stroke-dasharray="1,1" opacity="0.9"/>
<line x1="778.5" y1="143.0" x2="778.5" y2="756.0" stroke="#3550d6" stroke-width="1.1" stroke-dasharray="1,1" opacity="0.9"/>
<line x1="828.5" y1="143.0" x2="828.5" y2="756.0" stroke="#3550d6" stroke-width="1.1" stroke-dasharray="1,1" opacity="0.9"/>
<line x1="879.5" y1="143.0" x2="879.5" y2="756.0" stroke="#3550d6" stroke-width="1.1" stroke-dasharray="1,1" opacity="0.9"/>
<line x1="175.0" y1="685.5" x2="885.8" y2="685.5" stroke="#fffbe6" stroke-width="1" opacity="0.35"/>
<line x1="175.0" y1="684.5" x2="885.8" y2="684.5" stroke="#3048d0" stroke-width="1"/>
<line x1="175.0" y1="617.5" x2="885.8" y2="617.5" stroke="#fffbe6" stroke-width="1" opacity="0.35"/>
<line x1="175.0" y1="616.5" x2="885.8" y2="616.5" stroke="#3048d0" stroke-width="1"/>
<line x1="175.0" y1="549.5" x2="885.8" y2="549.5" stroke="#fffbe6" stroke-width="1" opacity="0.35"/>
<line x1="175.0" y1="548.5" x2="885.8" y2="548.5" stroke="#3048d0" stroke-width="1"/>
<line x1="175.0" y1="482.5" x2="885.8" y2="482.5" stroke="#fffbe6" stroke-width="1" opacity="0.35"/>
<line x1="175.0" y1="481.5" x2="885.8" y2="481.5" stroke="#3048d0" stroke-width="1"/>
<line x1="175.0" y1="414.5" x2="885.8" y2="414.5" stroke="#fffbe6" stroke-width="1" opacity="0.35"/>
<line x1="175.0" y1="413.5" x2="885.8" y2="413.5" stroke="#3048d0" stroke-width="1"/>
<line x1="175.0" y1="346.5" x2="885.8" y2="346.5" stroke="#fffbe6" stroke-width="1" opacity="0.35"/>
<line x1="175.0" y1="345.5" x2="885.8" y2="345.5" stroke="#3048d0" stroke-width="1"/>
<line x1="175.0" y1="279.5" x2="885.8" y2="279.5" stroke="#fffbe6" stroke-width="1" opacity="0.35"/>
<line x1="175.0" y1="278.5" x2="885.8" y2="278.5" stroke="#3048d0" stroke-width="1"/>
<line x1="175.0" y1="211.5" x2="885.8" y2="211.5" stroke="#fffbe6" stroke-width="1" opacity="0.35"/>
<line x1="175.0" y1="210.5" x2="885.8" y2="210.5" stroke="#3048d0" stroke-width="1"/>
<rect x="173.3" y="140.2" width="713.3" height="1.1" fill="#f1efe2"/>
<rect x="174.2" y="141.2" width="712.4" height="1.9" fill="#6666f0"/>
<rect x="174.2" y="143.0" width="712.4" height="1.8" fill="#7f8fd6"/>
<rect x="176" y="144.8" width="709" height="1" fill="#f4f0dc" opacity="0.9"/>
<path d="M175,141.2 V756 H885.8 V141.2" fill="none" stroke="#3a3aee" stroke-width="1.35"/>
<path d="M175.3,754.5 L175.4,751.8 L176.3,749.5 L176.6,747.8 L176.2,745.9 L176.6,743.6 L177.1,740.9 L178.0,739.8 L177.9,736.8 L179.1,735.7 L179.4,732.7 L179.7,730.7 L180.9,727.8 L181.3,725.9 L180.8,723.4 L181.5,722.2 L181.9,719.6 L183.1,717.0 L183.5,714.3 L183.3,712.3 L184.5,710.5 L186.6,708.6 L187.9,707.0 L190.0,705.0 L192.1,703.6 L194.8,703.1 L196.2,701.8 L198.8,701.2 L201.0,699.5 L202.7,696.9 L204.5,694.3 L205.0,693.0 L206.5,690.3 L206.5,687.9 L206.8,685.8 L208.4,683.3 L209.1,680.6 L209.3,678.7 L209.6,676.1 L210.0,673.8 L211.5,672.3 L212.0,669.7 L212.3,667.6 L214.2,665.9 L215.5,662.7 L215.8,661.1 L216.3,658.6 L217.5,655.9 L218.3,654.7 L219.4,651.8 L221.0,650.0 L222.1,648.7 L222.9,646.3 L224.8,645.1 L226.5,643.2 L226.9,640.7 L228.5,639.0 L228.9,637.4 L230.4,634.2 L229.8,632.2 L230.5,630.4 L231.7,627.9 L231.4,626.0 L232.6,624.1 L234.0,622.2 L234.0,619.9 L234.8,616.9 L235.8,615.9 L235.8,613.3 L237.8,611.5 L238.5,608.7 L239.5,606.9 L240.9,603.9 L243.0,602.3 L243.8,599.6 L245.3,597.2 L246.1,595.2 L247.5,593.3 L249.4,591.3 L250.7,593.1 L253.5,593.2 L255.3,595.0 L255.5,592.5 L256.2,589.9 L257.5,588.9 L257.4,585.8 L257.4,583.0 L258.4,580.9 L259.6,578.5 L259.7,576.7 L260.6,575.5 L262.9,572.5 L264.6,570.5 L266.1,570.1 L268.2,567.8 L268.9,565.5 L270.4,564.2 L272.5,562.0 L273.3,560.2 L273.7,557.2 L275.2,556.1 L275.9,553.7 L276.6,551.4 L276.5,548.8 L277.4,545.9 L277.6,544.1 L278.7,542.5 L279.8,540.0 L281.8,537.9 L283.0,536.7 L284.4,533.8 L284.5,531.6 L286.2,530.0 L285.9,527.3 L286.6,526.1 L286.9,523.2 L286.7,521.4 L285.9,518.9 L287.2,516.9 L287.0,514.1 L286.2,512.3 L286.5,510.1 L287.6,507.2 L286.8,505.8 L287.3,502.4 L286.5,500.1 L287.7,498.8 L286.6,496.6 L287.9,494.0 L287.0,491.6 L286.8,488.6 L288.1,487.2 L287.5,485.4 L287.5,482.5 L288.5,480.9 L290.2,477.7 L290.4,475.6 L291.5,473.9 L292.6,471.4 L293.5,470.0 L294.9,467.1 L296.2,465.0 L297.3,463.4 L298.0,461.3 L299.1,458.5 L300.0,455.5 L300.8,453.6 L301.1,452.3 L302.3,449.6 L303.8,447.5 L305.2,445.4 L305.7,443.2 L307.1,441.4 L307.5,438.8 L308.8,436.2 L310.7,434.4 L311.5,432.6 L312.5,430.0 L313.5,427.4 L313.5,425.0 L313.8,422.5 L314.0,425.3 L314.1,427.5 L314.3,430.7 L314.5,432.5 L318.0,431.0 L318.9,429.3 L319.8,426.0 L319.8,424.7 L320.8,421.2 L320.2,419.4 L320.7,416.7 L321.3,415.1 L322.5,412.5 L323.8,411.0 L323.6,408.7 L325.2,405.7 L326.4,404.9 L326.2,402.8 L327.3,400.0 L329.1,398.4 L328.7,395.7 L330.0,393.5 L330.4,391.4 L332.0,388.9 L332.5,387.5 L333.1,385.2 L332.9,382.8 L334.3,380.9 L334.0,379.4 L335.7,377.2 L335.2,373.9 L335.7,372.5 L336.6,369.3 L337.3,368.3 L338.0,365.5 L340.8,366.5 L342.1,368.8 L345.0,369.5 L347.2,371.6 L348.6,372.5 L351.2,375.0 L353.4,376.6 L354.4,379.2 L357.1,380.7 L358.8,382.0 L360.2,383.4 L362.3,384.2 L365.0,384.5 L367.4,383.8 L370.1,384.1 L372.2,382.4 L375.0,382.1 L377.5,382.0 L379.1,382.1 L381.2,382.8 L383.8,383.6 L386.2,384.5 L388.3,381.9 L389.6,379.4 L391.2,377.5 L392.0,374.7 L392.8,372.6 L394.5,371.3 L394.7,369.1 L396.8,366.5 L397.6,364.9 L398.0,363.4 L398.9,360.8 L400.0,358.8 L401.5,357.4 L402.3,355.2 L404.1,352.9 L404.9,350.4 L405.6,348.0 L406.9,346.9 L408.4,344.0 L410.0,342.5 L410.6,341.1 L413.1,338.9 L413.4,336.3 L414.7,334.7 L415.7,332.7 L417.1,331.6 L419.5,329.0 L420.0,327.0 L420.7,325.7 L421.8,322.8 L422.4,320.8 L424.1,319.0 L424.8,317.0 L426.2,315.0 L427.6,313.0 L429.8,311.5 L432.5,310.0 L432.9,306.8 L434.5,304.6 L436.0,302.5 L437.0,300.0 L439.4,301.9 L441.3,303.9 L443.0,305.0 L443.7,302.7 L445.5,300.4 L446.0,299.1 L445.8,297.4 L448.0,295.0 L448.6,293.3 L448.6,290.8 L450.0,288.8 L451.3,287.1 L453.0,285.0 L453.9,283.0 L455.3,280.5 L455.8,277.4 L456.9,275.8 L458.2,274.4 L460.0,271.8 L462.6,270.5 L465.2,269.2 L467.5,267.5 L471.2,268.8 L471.9,265.7 L472.9,264.5 L473.1,261.9 L474.0,258.9 L474.7,256.9 L475.0,255.0 L475.1,252.4 L476.8,250.1 L477.6,249.0 L478.0,245.8 L478.7,244.0 L479.9,241.7 L480.5,238.6 L480.5,236.6 L482.1,234.5 L482.5,232.5 L483.4,229.5 L483.3,227.7 L485.0,226.0 L485.8,223.2 L486.3,221.2 L486.9,218.4 L488.3,216.3 L489.2,215.2 L488.5,212.2 L490.0,210.0 L491.1,208.5 L491.2,205.3 L491.4,204.1 L492.1,201.4 L492.6,199.1 L494.4,196.3 L494.9,194.7 L495.0,192.5 L496.8,190.9 L497.1,189.3 L498.7,186.2 L499.3,185.0 L501.2,182.8 L502.5,181.2 L503.7,179.3 L505.7,178.3 L507.0,176.4 L510.0,173.7 L511.2,172.5 L514.0,172.0 L516.0,170.5 L517.5,170.0 L519.8,170.3 L523.2,171.1 L524.8,171.4 L527.5,172.0 L529.7,170.9 L531.9,171.7 L534.7,171.4 L537.1,170.0 L540.0,169.5 L542.5,169.5 L545.4,171.1 L548.8,171.2 L550.9,173.3 L552.1,175.0 L554.1,176.0 L555.0,177.5 L556.8,178.5 L558.3,180.8 L559.8,182.7 L560.5,183.5 L562.9,185.3 L563.8,187.5 L564.4,189.5 L564.8,192.3 L566.5,193.8 L566.8,196.1 L567.3,198.5 L567.4,200.3 L568.2,203.7 L569.3,204.9 L570.0,207.5 L571.3,210.4 L571.4,211.2 L571.7,213.3 L572.6,215.5 L573.2,217.9 L574.4,220.9 L575.4,222.4 L575.6,224.7 L576.2,226.5 L576.5,228.6 L578.6,230.5 L578.6,233.4 L579.8,234.9 L580.0,237.5 L580.3,239.3 L581.1,241.7 L582.6,244.5 L583.1,245.4 L582.4,248.5 L584.3,250.3 L584.5,251.8 L584.8,255.3 L586.1,257.3 L587.0,258.6 L586.3,260.6 L587.5,263.5 L588.8,265.7 L588.8,267.5 L591.2,268.6 L593.2,269.1 L594.8,270.2 L597.3,271.1 L600.0,271.2 L601.3,272.9 L601.6,274.8 L603.4,277.4 L603.7,278.5 L605.4,281.2 L606.3,282.6 L607.5,285.0 L608.7,286.2 L609.3,288.9 L611.4,291.1 L612.4,292.8 L612.5,294.4 L614.6,297.1 L615.0,298.8 L615.5,300.2 L616.5,303.4 L617.1,304.9 L618.0,307.5 L619.7,306.4 L620.5,303.3 L622.1,302.1 L623.8,300.5 L625.0,302.4 L626.1,305.6 L626.6,307.2 L627.5,310.0 L629.7,311.5 L631.0,313.1 L631.6,315.6 L633.2,317.7 L635.0,318.8 L636.1,320.2 L636.7,322.6 L638.5,325.3 L638.8,326.4 L639.9,329.3 L640.9,329.9 L642.5,332.5 L643.1,334.3 L645.6,337.0 L646.6,339.1 L648.1,340.0 L648.3,342.9 L650.4,343.5 L651.5,345.9 L652.3,347.8 L653.8,350.0 L654.5,351.2 L655.9,353.7 L658.2,355.3 L659.4,357.4 L659.8,360.3 L661.7,361.7 L662.5,363.8 L662.7,365.9 L664.1,368.8 L664.8,370.2 L666.7,371.9 L666.9,375.2 L668.4,376.3 L668.2,378.5 L670.4,381.0 L671.1,384.2 L671.3,385.5 L672.5,388.0 L675.4,388.1 L676.6,388.1 L679.0,387.4 L680.8,388.0 L683.8,387.5 L686.6,388.5 L688.9,388.3 L690.1,389.7 L693.4,391.2 L695.0,391.2 L697.3,390.0 L700.0,389.5 L701.6,387.9 L704.0,385.9 L705.5,385.1 L707.2,383.6 L708.5,381.3 L710.0,380.0 L712.9,378.8 L716.2,378.0 L718.5,375.2 L720.0,373.8 L722.5,374.5 L722.5,377.2 L723.1,378.5 L723.3,381.6 L724.2,384.6 L725.0,386.2 L726.6,389.3 L726.7,390.2 L727.5,393.1 L729.5,395.3 L729.8,397.6 L731.2,400.0 L732.1,402.4 L733.1,404.8 L733.6,405.9 L734.6,408.3 L734.9,410.5 L735.9,412.4 L736.2,415.0 L736.4,416.8 L736.7,420.0 L737.8,421.4 L738.0,424.6 L738.7,425.7 L739.6,428.5 L740.4,429.9 L740.1,433.2 L741.1,435.5 L740.4,436.8 L741.0,438.9 L742.7,441.7 L742.5,443.8 L745.6,444.2 L747.5,445.0 L748.8,447.3 L748.7,450.1 L750.5,451.4 L750.8,454.6 L751.0,456.5 L751.6,458.6 L752.6,461.6 L753.8,463.8 L754.9,465.3 L754.9,467.6 L756.8,469.4 L757.2,471.4 L758.9,474.0 L758.7,475.3 L760.2,478.0 L761.2,480.0 L762.1,481.6 L762.0,484.8 L763.0,486.4 L763.5,489.7 L764.1,491.3 L764.8,493.4 L766.2,496.5 L766.0,497.5 L767.2,499.8 L767.5,502.5 L767.5,505.4 L768.9,507.5 L769.6,509.8 L770.4,511.0 L770.5,513.8 L772.2,516.6 L772.1,518.4 L773.3,520.5 L773.7,522.4 L775.0,525.0 L775.8,527.8 L776.0,529.3 L777.8,532.1 L777.7,533.0 L779.6,536.4 L779.7,537.2 L780.5,540.0 L782.1,541.9 L782.9,544.3 L783.7,545.7 L784.6,547.8 L784.9,550.8 L786.5,551.9 L786.5,554.3 L787.8,556.5 L789.4,558.2 L790.3,559.8 L792.7,562.6 L793.2,563.9 L795.9,565.0 L797.0,567.5 L798.4,569.1 L799.0,571.8 L799.9,573.6 L800.5,576.2 L801.5,578.4 L802.5,580.3 L803.7,583.0 L805.0,585.8 L805.8,583.2 L808.0,580.3 L808.7,582.4 L809.9,585.6 L810.1,587.2 L810.9,589.5 L811.1,592.4 L812.4,595.0 L816.0,593.0 L816.2,594.9 L817.7,596.4 L818.8,598.5 L819.8,601.5 L820.3,602.5 L821.1,605.0 L822.6,606.7 L823.3,610.0 L824.0,611.7 L824.5,613.3 L824.7,616.3 L825.7,618.5 L827.0,619.5 L827.4,622.9 L826.9,624.3 L828.6,626.3 L829.4,628.7 L829.9,630.7 L830.0,633.5 L831.2,636.1 L832.0,637.1 L833.7,639.2 L834.2,641.0 L835.6,644.1 L837.6,646.0 L838.1,647.8 L839.2,649.4 L841.2,651.1 L842.8,653.4 L843.6,655.9 L844.7,657.3 L844.8,660.3 L846.3,661.7 L847.2,663.7 L848.2,666.5 L848.0,669.0 L848.8,670.4 L850.0,672.5 L850.8,675.0 L851.2,678.4 L851.8,680.2 L852.1,681.4 L852.4,683.9 L853.8,686.7 L855.8,688.4 L857.5,691.0 L859.3,692.2 L861.2,693.0 L864.5,693.9 L866.7,695.8 L867.3,697.4 L868.8,699.2 L870.3,701.3 L872.0,703.0 L872.8,704.7 L873.4,707.2 L873.3,710.0 L874.1,710.9 L874.5,713.8 L876.3,716.1 L876.2,717.4 L876.2,720.1 L877.6,722.0 L878.3,724.0 L879.0,726.5 L880.0,729.2 L879.5,731.7 L879.8,733.4 L880.9,735.2 L880.9,738.3 L881.5,740.3 L883.4,741.9 L882.9,744.9 L883.9,747.0" fill="none" stroke="#fb0606" stroke-width="2.5" stroke-linejoin="round" stroke-linecap="round" shape-rendering="crispEdges"/>
</svg>
<div class="ax" style="left:177.2px;top:119.9px;"><span class="fit" style="transform:scaleX(1.0941);transform-origin:left 50%">0.0</span></div>
<div class="ax" style="left:74.78px;top:119.9px;width:300px;text-align:center;"><span class="fit" style="transform:scaleX(1.0824);transform-origin:center 50%">1.0</span></div>
<div class="ax" style="left:125.06px;top:119.9px;width:300px;text-align:center;"><span class="fit" style="transform:scaleX(1.0824);transform-origin:center 50%">2.0</span></div>
<div class="ax" style="left:175.34px;top:119.9px;width:300px;text-align:center;"><span class="fit" style="transform:scaleX(1.0824);transform-origin:center 50%">3.0</span></div>
<div class="ax" style="left:225.62px;top:119.9px;width:300px;text-align:center;"><span class="fit" style="transform:scaleX(1.0824);transform-origin:center 50%">4.0</span></div>
<div class="ax" style="left:275.9px;top:119.9px;width:300px;text-align:center;"><span class="fit" style="transform:scaleX(1.0824);transform-origin:center 50%">5.0</span></div>
<div class="ax" style="left:326.18px;top:119.9px;width:300px;text-align:center;"><span class="fit" style="transform:scaleX(1.0824);transform-origin:center 50%">6.0</span></div>
<div class="ax" style="left:376.46px;top:119.9px;width:300px;text-align:center;"><span class="fit" style="transform:scaleX(1.0824);transform-origin:center 50%">7.0</span></div>
<div class="ax" style="left:426.74px;top:119.9px;width:300px;text-align:center;"><span class="fit" style="transform:scaleX(1.0824);transform-origin:center 50%">8.0</span></div>
<div class="ax" style="left:477.02px;top:119.9px;width:300px;text-align:center;"><span class="fit" style="transform:scaleX(1.0824);transform-origin:center 50%">9.0</span></div>
<div class="ax" style="left:527.3px;top:119.9px;width:300px;text-align:center;"><span class="fit" style="transform:scaleX(1.0590);transform-origin:center 50%">10.0</span></div>
<div class="ax" style="left:577.58px;top:119.9px;width:300px;text-align:center;"><span class="fit" style="transform:scaleX(1.0934);transform-origin:center 50%">11.0</span></div>
<div class="ax" style="left:627.86px;top:119.9px;width:300px;text-align:center;"><span class="fit" style="transform:scaleX(1.0590);transform-origin:center 50%">12.0</span></div>
<div class="ax" style="left:678.14px;top:119.9px;width:300px;text-align:center;"><span class="fit" style="transform:scaleX(1.0590);transform-origin:center 50%">13.0</span></div>
<div class="ax" style="left:885.7px;top:119.9px;"><span class="fit" style="transform:scaleX(0.8908);transform-origin:left 50%">[km]</span></div>
<div class="ax" style="left:85.8px;top:135px;"><span class="fit" style="transform:scaleX(0.9122);transform-origin:left 50%">[m]</span></div>
<div class="ax" style="left:-137.8px;top:133.9px;width:300px;text-align:right;"><span class="fit" style="transform:scaleX(1.0446);transform-origin:right 50%">1500</span></div>
<div class="ax" style="left:-137.8px;top:201.55px;width:300px;text-align:right;"><span class="fit" style="transform:scaleX(1.0446);transform-origin:right 50%">1400</span></div>
<div class="ax" style="left:-137.8px;top:269.2px;width:300px;text-align:right;"><span class="fit" style="transform:scaleX(1.0446);transform-origin:right 50%">1300</span></div>
<div class="ax" style="left:-137.8px;top:336.85px;width:300px;text-align:right;"><span class="fit" style="transform:scaleX(1.0446);transform-origin:right 50%">1200</span></div>
<div class="ax" style="left:-137.8px;top:404.5px;width:300px;text-align:right;"><span class="fit" style="transform:scaleX(1.0742);transform-origin:right 50%">1100</span></div>
<div class="ax" style="left:-137.8px;top:472.15px;width:300px;text-align:right;"><span class="fit" style="transform:scaleX(1.0446);transform-origin:right 50%">1000</span></div>
<div class="ax" style="left:-137.8px;top:539.8px;width:300px;text-align:right;"><span class="fit" style="transform:scaleX(1.0789);transform-origin:right 50%">900</span></div>
<div class="ax" style="left:-137.8px;top:607.45px;width:300px;text-align:right;"><span class="fit" style="transform:scaleX(1.0789);transform-origin:right 50%">800</span></div>
<div class="ax" style="left:-137.8px;top:675.1px;width:300px;text-align:right;"><span class="fit" style="transform:scaleX(1.0789);transform-origin:right 50%">700</span></div>
<div class="ax" style="left:-137.8px;top:747.162px;width:300px;text-align:right;"><span class="fit" style="transform:scaleX(1.0789);transform-origin:right 50%">592</span></div>
<div class="mk" style="left:244.2px;top:417.3px;">小さな崖<span class="ar">→</span></div>
<div class="mk v" style="left:378.9px;top:0;"><b class="va" style="top:394px"><span class="ar">↑</span></b><b style="top:406.5px">沢</b><b class="vp" style="top:417.1px"><i>(</i></b><b style="top:426.8px">水</b><b class="vp" style="top:436.4px"><i>)</i></b></div>
<div class="mk v" style="left:464px;top:0;"><b class="va" style="top:279px"><span class="ar">↑</span></b><b style="top:295px">分</b><b style="top:308.7px">岐</b></div>
<div style="left:174px;top:758.2px;width:711px;height:23.2px;background:#fff;border-top:1.3px solid #4a4a55;border-left:1px solid #55555f;border-right:1.3px solid #2c2c3c;border-bottom:1px solid #6b6b6b;box-sizing:border-box;"></div>
<div style="left:176px;top:760.5px;width:706.8px;height:18.6px;background:#f0f0f0;"></div>
<div class="bt" style="left:378px;top:762px;width:300px;text-align:center;"><span class="fit" style="transform:scaleX(1.0538);transform-origin:center 50%"><span class="cj">区間</span> 1</span></div>
<div style="left:174px;top:781.3px;width:711.2px;height:67.6px;background:#a7b8fd;border-left:1px solid #4a5078;border-right:1.2px solid #3a4060;border-bottom:1.2px solid #3a4060;box-sizing:border-box;"></div>
<div class="bt" style="left:379.3px;top:782.35px;width:300px;text-align:center;"><span class="fit" style="transform:scaleX(0.9749);transform-origin:center 50%">14.122km</span></div>
<div class="bt" style="left:379.3px;top:799.1px;width:300px;text-align:center;"><span class="fit" style="transform:scaleX(0.9749);transform-origin:center 50%">14.466km</span></div>
<div class="bt" style="left:379.3px;top:815.6px;width:300px;text-align:center;"><span class="fit" style="transform:scaleX(1.0267);transform-origin:center 50%">07:29:46</span></div>
<div class="bt" style="left:379.3px;top:832.6px;width:300px;text-align:center;"><span class="fit" style="transform:scaleX(0.9906);transform-origin:center 50%">14.420m</span></div>
<div class="bt" style="left:-136.7px;top:780.6px;width:300px;text-align:right;"><span class="fit" style="transform:scaleX(1.0467);transform-origin:right 50%"><span class="cj">直線距離</span></span></div>
<div class="bt" style="left:-136.7px;top:796.9px;width:300px;text-align:right;"><span class="fit" style="transform:scaleX(1.0467);transform-origin:right 50%"><span class="cj">沿面距離</span></span></div>
<div class="bt" style="left:-136.7px;top:813.6px;width:300px;text-align:right;"><span class="fit" style="transform:scaleX(1.0467);transform-origin:right 50%"><span class="cj">所要時間</span></span></div>
<div class="bt" style="left:-136.7px;top:829.8px;width:300px;text-align:right;"><span class="fit" style="transform:scaleX(1.0459);transform-origin:right 50%"><span class="cj">標高差</span></span></div>
<div style="left:913.2px;top:110.8px;width:185px;height:754.2px;background:#f0f0f0;border-left:1.8px solid #828282;border-top:1px solid #8f8f8f;box-sizing:border-box;"></div>
<div style="left:914.8px;top:111.8px;width:1px;height:753px;background:#fcfcfc;"></div>
<div style="left:915px;top:111.8px;width:182px;height:18.5px;background:#f0f0f0;border:1px solid #fff;border-right:2px solid #7a7a7a;border-bottom:2px solid #7a7a7a;box-sizing:border-box;"><div class="ph" style="left:1.5px;top:0.2px;"><span class="fit" style="transform:scaleX(0.9213);transform-origin:left 50%">全区間 (トラック)</span></div></div>
<div style="left:915px;top:290.5px;width:182px;height:17.5px;background:#f0f0f0;border:1px solid #fff;border-right:2px solid #7a7a7a;border-bottom:2px solid #7a7a7a;box-sizing:border-box;"><div class="ph" style="left:1.5px;top:0.2px;"><span class="fit" style="transform:scaleX(1.0496);transform-origin:left 50%">全区間 (地形)</span></div></div>
<div style="left:920px;top:130.3px;width:171px;height:160.5px;border:1px solid #9c9c9c;border-right-color:#fff;border-bottom-color:#fff;box-sizing:border-box;"></div><div style="left:921.5px;top:133.3px;width:168px;height:153.5px;background:#fff;border:1px solid #9a9a9a;box-sizing:border-box;"></div><div class="pr" style="left:923.3px;top:131.877px;"><span class="fit" style="transform:scaleX(0.9996);transform-origin:left 50%"><span class="cj">距離</span></span></div><div class="pr" style="left:786.8px;top:133.677px;width:300px;text-align:right;"><span class="fit" style="transform:scaleX(0.9732);transform-origin:right 50%">14.122km</span></div><div style="left:922px;top:147.255px;width:167px;height:1px;background:#a6a6a6;"></div><div class="pr" style="left:923.3px;top:145.832px;"><span class="fit" style="transform:scaleX(1.0203);transform-origin:left 50%"><span class="cj">沿面距離</span></span></div><div class="pr" style="left:786.8px;top:147.632px;width:300px;text-align:right;"><span class="fit" style="transform:scaleX(0.9732);transform-origin:right 50%">14.466km</span></div><div style="left:922px;top:161.209px;width:167px;height:1px;background:#a6a6a6;"></div><div class="pr" style="left:923.3px;top:159.786px;"><span class="fit" style="transform:scaleX(1.0107);transform-origin:left 50%"><span class="cj">標高差</span></span></div><div class="pr" style="left:786.8px;top:161.586px;width:300px;text-align:right;"><span class="fit" style="transform:scaleX(0.9866);transform-origin:right 50%">14.420m</span></div><div style="left:922px;top:175.164px;width:167px;height:1px;background:#a6a6a6;"></div><div class="pr" style="left:923.3px;top:173.741px;"><span class="fit" style="transform:scaleX(0.9996);transform-origin:left 50%"><span class="cj">方位</span></span></div><div class="pr" style="left:779.6px;top:175.541px;width:300px;text-align:right;"><span class="fit" style="transform:scaleX(1.0633);transform-origin:right 50%">210.77°</span></div><div style="left:922px;top:189.118px;width:167px;height:1px;background:#a6a6a6;"></div><div class="pr" style="left:923.3px;top:187.695px;"><span class="fit" style="transform:scaleX(0.9994);transform-origin:left 50%"><span class="cj">俯角<span class="ar2">→</span></span></span></div><div class="pr" style="left:779.6px;top:189.495px;width:300px;text-align:right;"><span class="fit" style="transform:scaleX(1.1229);transform-origin:right 50%">-71.65°</span></div><div style="left:922px;top:203.073px;width:167px;height:1px;background:#a6a6a6;"></div><div class="pr" style="left:923.3px;top:201.65px;"><span class="fit" style="transform:scaleX(0.9994);transform-origin:left 50%"><span class="cj">俯角<span class="ar2">←</span></span></span></div><div class="pr" style="left:779.6px;top:203.45px;width:300px;text-align:right;"><span class="fit" style="transform:scaleX(1.0779);transform-origin:right 50%">71.65°</span></div><div style="left:922px;top:217.027px;width:167px;height:1px;background:#a6a6a6;"></div><div class="pr" style="left:923.3px;top:215.605px;"><span class="fit" style="transform:scaleX(1.0107);transform-origin:left 50%"><span class="cj">沈み量</span></span></div><div class="pr" style="left:786.8px;top:217.405px;width:300px;text-align:right;"><span class="fit" style="transform:scaleX(0.9816);transform-origin:right 50%">-0m</span></div><div style="left:922px;top:230.982px;width:167px;height:1px;background:#a6a6a6;"></div><div class="pr" style="left:923.3px;top:229.559px;"><span class="fit" style="transform:scaleX(1.0203);transform-origin:left 50%"><span class="cj">所要時間</span></span></div><div class="pr" style="left:786.8px;top:231.359px;width:300px;text-align:right;"><span class="fit" style="transform:scaleX(1.0209);transform-origin:right 50%">07:29:46</span></div><div style="left:922px;top:244.936px;width:167px;height:1px;background:#a6a6a6;"></div><div class="pr" style="left:923.3px;top:243.514px;"><span class="fit" style="transform:scaleX(1.0233);transform-origin:left 50%"><span class="cj">累積標高(+)</span></span></div><div class="pr" style="left:786.8px;top:245.314px;width:300px;text-align:right;"><span class="fit" style="transform:scaleX(1.0067);transform-origin:right 50%">1090.615m</span></div><div style="left:922px;top:258.891px;width:167px;height:1px;background:#a6a6a6;"></div><div class="pr" style="left:923.3px;top:257.468px;"><span class="fit" style="transform:scaleX(1.0880);transform-origin:left 50%"><span class="cj">累積標高(-)</span></span></div><div class="pr" style="left:786.8px;top:259.268px;width:300px;text-align:right;"><span class="fit" style="transform:scaleX(1.0519);transform-origin:right 50%">-1076.196m</span></div><div style="left:922px;top:272.845px;width:167px;height:1px;background:#a6a6a6;"></div><div class="pr" style="left:923.3px;top:271.423px;"><span class="fit" style="transform:scaleX(1.0203);transform-origin:left 50%"><span class="cj">平均速度</span></span></div><div class="pr" style="left:786.8px;top:273.223px;width:300px;text-align:right;"><span class="fit" style="transform:scaleX(1.0180);transform-origin:right 50%">1.9km/h</span></div>
<div style="left:920px;top:308px;width:171px;height:160.5px;border:1px solid #9c9c9c;border-right-color:#fff;border-bottom-color:#fff;box-sizing:border-box;"></div><div style="left:921.5px;top:311px;width:168px;height:153.5px;background:#fff;border:1px solid #9a9a9a;box-sizing:border-box;"></div><div class="pr" style="left:923.3px;top:309.577px;"><span class="fit" style="transform:scaleX(0.9996);transform-origin:left 50%"><span class="cj">距離</span></span></div><div class="pr" style="left:786.8px;top:311.377px;width:300px;text-align:right;"><span class="fit" style="transform:scaleX(0.9732);transform-origin:right 50%">14.122km</span></div><div style="left:922px;top:324.955px;width:167px;height:1px;background:#a6a6a6;"></div><div class="pr" style="left:923.3px;top:323.532px;"><span class="fit" style="transform:scaleX(1.0203);transform-origin:left 50%"><span class="cj">沿面距離</span></span></div><div class="pr" style="left:786.8px;top:325.332px;width:300px;text-align:right;"><span class="fit" style="transform:scaleX(0.9732);transform-origin:right 50%">14.356km</span></div><div style="left:922px;top:338.909px;width:167px;height:1px;background:#a6a6a6;"></div><div class="pr" style="left:923.3px;top:337.486px;"><span class="fit" style="transform:scaleX(1.0107);transform-origin:left 50%"><span class="cj">標高差</span></span></div><div class="pr" style="left:786.8px;top:339.286px;width:300px;text-align:right;"><span class="fit" style="transform:scaleX(0.9866);transform-origin:right 50%">14.420m</span></div><div style="left:922px;top:352.864px;width:167px;height:1px;background:#a6a6a6;"></div><div class="pr" style="left:923.3px;top:351.441px;"><span class="fit" style="transform:scaleX(0.9996);transform-origin:left 50%"><span class="cj">方位</span></span></div><div class="pr" style="left:779.6px;top:353.241px;width:300px;text-align:right;"><span class="fit" style="transform:scaleX(1.0633);transform-origin:right 50%">210.77°</span></div><div style="left:922px;top:366.818px;width:167px;height:1px;background:#a6a6a6;"></div><div class="pr" style="left:923.3px;top:365.395px;"><span class="fit" style="transform:scaleX(0.9994);transform-origin:left 50%"><span class="cj">俯角<span class="ar2">→</span></span></span></div><div class="pr" style="left:779.6px;top:367.195px;width:300px;text-align:right;"><span class="fit" style="transform:scaleX(1.1229);transform-origin:right 50%">-71.65°</span></div><div style="left:922px;top:380.773px;width:167px;height:1px;background:#a6a6a6;"></div><div class="pr" style="left:923.3px;top:379.35px;"><span class="fit" style="transform:scaleX(0.9994);transform-origin:left 50%"><span class="cj">俯角<span class="ar2">←</span></span></span></div><div class="pr" style="left:779.6px;top:381.15px;width:300px;text-align:right;"><span class="fit" style="transform:scaleX(1.0779);transform-origin:right 50%">71.65°</span></div><div style="left:922px;top:394.727px;width:167px;height:1px;background:#a6a6a6;"></div><div class="pr" style="left:923.3px;top:393.305px;"><span class="fit" style="transform:scaleX(1.0107);transform-origin:left 50%"><span class="cj">沈み量</span></span></div><div class="pr" style="left:786.8px;top:395.105px;width:300px;text-align:right;"><span class="fit" style="transform:scaleX(0.9816);transform-origin:right 50%">-0m</span></div><div style="left:922px;top:408.682px;width:167px;height:1px;background:#a6a6a6;"></div><div class="pr" style="left:923.3px;top:407.259px;"><span class="fit" style="transform:scaleX(1.0203);transform-origin:left 50%"><span class="cj">推定時間</span></span></div><div class="pr" style="left:786.8px;top:409.059px;width:300px;text-align:right;"><span class="fit" style="transform:scaleX(1.0209);transform-origin:right 50%">04:40:26</span></div><div style="left:922px;top:422.636px;width:167px;height:1px;background:#a6a6a6;"></div><div class="pr" style="left:923.3px;top:421.214px;"><span class="fit" style="transform:scaleX(1.0233);transform-origin:left 50%"><span class="cj">累積標高(+)</span></span></div><div class="pr" style="left:786.8px;top:423.014px;width:300px;text-align:right;"><span class="fit" style="transform:scaleX(1.0067);transform-origin:right 50%">1051.300m</span></div><div style="left:922px;top:436.591px;width:167px;height:1px;background:#a6a6a6;"></div><div class="pr" style="left:923.3px;top:435.168px;"><span class="fit" style="transform:scaleX(1.0880);transform-origin:left 50%"><span class="cj">累積標高(-)</span></span></div><div class="pr" style="left:786.8px;top:436.968px;width:300px;text-align:right;"><span class="fit" style="transform:scaleX(1.0519);transform-origin:right 50%">-1051.237m</span></div><div style="left:922px;top:450.545px;width:167px;height:1px;background:#a6a6a6;"></div><div class="pr" style="left:923.3px;top:449.123px;"><span class="fit" style="transform:scaleX(0.9619);transform-origin:left 50%"><span class="cj">見通し</span></span></div><div class="pr" style="left:786.5px;top:449.123px;width:300px;text-align:right;"><span class="fit" style="transform:scaleX(0.9247);transform-origin:right 50%"><span class="cj">見えます</span></span></div>
<div style="left:83.2px;top:26px;width:1px;height:840px;background:#6b6866;"></div>
<div style="left:83.2px;top:53.9px;width:1px;height:812.1px;background:#8d8d8d;"></div>
<div style="left:1097.8px;top:53.9px;width:1.2px;height:812.1px;background:#8d8d8d;"></div>
<div style="left:83.2px;top:865.1px;width:1015.8px;height:1.5px;background:#8a8a8a;"></div>
</body></html>
